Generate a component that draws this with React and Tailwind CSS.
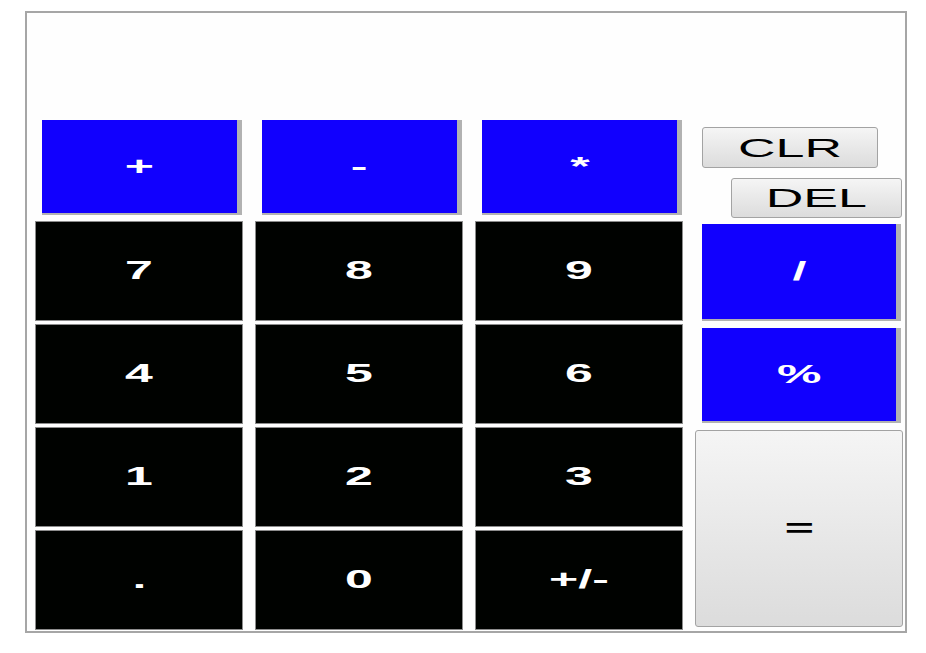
import React from 'react';

const Wide = ({ children, className = '' }) => (
  <span className={`inline-block scale-x-200 ${className}`}>{children}</span>
);

const OpButton = ({ label, className = '' }) => (
  <button
    className={`flex items-center justify-center bg-[#1100fe] text-white font-bold text-[25px] leading-none shadow-[5px_0_0_#b2b2b2,0_2px_0_#b2b2b2,5px_2px_0_#b2b2b2] ${className}`}
  >
    <Wide>{label}</Wide>
  </button>
);

const NumButton = ({ label }) => (
  <button className="flex h-[100px] w-full items-center justify-center border border-[#8c8c8c] bg-[#000200] text-white font-bold text-[25px] leading-none">
    <Wide className="-translate-y-[1px]">{label}</Wide>
  </button>
);

const GrayButton = ({ label, className = '', bold = false }) => (
  <button
    className={`flex items-center justify-center rounded-[3px] border border-[#a3a3a3] bg-gradient-to-b from-[#f5f5f5] to-[#dcdcdc] text-black leading-none ${bold ? 'font-bold text-[25px]' : 'text-[26px]'} ${className}`}
  >
    <Wide>{label}</Wide>
  </button>
);

const columns = [
  { op: '+', keys: ['7', '4', '1', '.'] },
  { op: '-', keys: ['8', '5', '2', '0'] },
  { op: '*', keys: ['9', '6', '3', '+/-'] },
];

export default function App() {
  return (
    <div className="min-h-screen bg-white pl-[25px] pt-[11px] font-['Liberation_Sans',Arial,sans-serif]">
      <div className="flex h-[622px] w-[882px] flex-col border-2 border-[#a6a6a6] bg-[#fefefe]">
        {/* display */}
        <div className="h-[107px]" />

        <div className="flex gap-[12px] pl-[8px]">
          {columns.map((col) => (
            <div key={col.op} className="flex w-[208px] flex-col">
              <div className="mb-[8px] pl-[7px]">
                <OpButton label={col.op} className="h-[93px] w-[195px]" />
              </div>
              <div className="flex flex-col gap-[3px]">
                {col.keys.map((k) => (
                  <NumButton key={k} label={k} />
                ))}
              </div>
            </div>
          ))}

          <div className="flex w-[208px] flex-col">
            <GrayButton label="CLR" className="ml-[7px] mt-[7px] h-[41px] w-[176px]" />
            <GrayButton label="DEL" className="ml-[36px] mt-[10px] h-[40px] w-[171px]" />
            <OpButton label="/" className="ml-[7px] mt-[6px] h-[95px] w-[194px]" />
            <OpButton label="%" className="ml-[7px] mt-[9px] h-[93px] w-[194px]" />
            <GrayButton label="=" bold className="mt-[9px] h-[197px] w-[208px]" />
          </div>
        </div>
      </div>
    </div>
  );
}
